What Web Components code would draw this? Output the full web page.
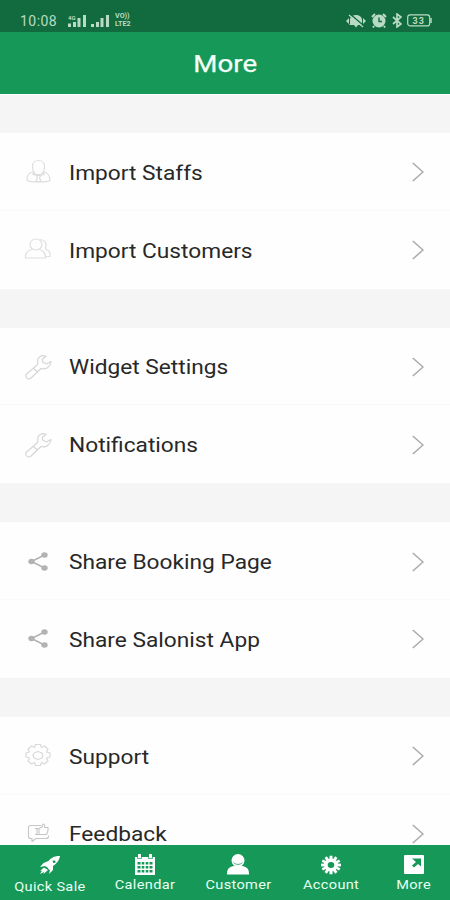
<!DOCTYPE html>
<html lang="en"><head><meta charset="utf-8"><title>More</title>
<style>
html,body{margin:0;padding:0;overflow:hidden}
body{width:450px;height:900px;font-family:Roboto,"Liberation Sans",sans-serif;background:#f5f5f5}
</style></head><body>
<more-screen></more-screen>
<script>
const define=(name,html)=>{
  const t=document.createElement('template');t.innerHTML=html;
  customElements.define(name,class extends HTMLElement{
    constructor(){super();this.attachShadow({mode:'open'}).append(t.content.cloneNode(true));}
    connectedCallback(){
      const icon=this.shadowRoot.querySelector('[data-icon]');
      if(icon)icon.innerHTML=ICONS[this.getAttribute('icon')]||'';
    }
  });
};
const ICONS={
staff:`<svg width="28" height="28" viewBox="0 0 28 28" fill="none" stroke="#dedede" stroke-width="1.2"><path d="M8.500 8.500c0-8 12-8 12 0c0 4-2 7-3.500 8h-5c-1.500-1-3.500-4-3.500-8z"/><path d="M10 13.500c-5 1-7.500 4-7 9c3 2 20 2 23 0c0-5-2.500-8-7-9M10 13.500l-1 3l5.500 1l5.500-1l-1-3M12 17.500h5l-1.500 2l1.500 4h-5l1.500-4z"/></svg>`,
customer:`<svg width="28" height="28" viewBox="0 0 28 28" fill="none" stroke="#dedede" stroke-width="1.2"><ellipse cx="12" cy="8.500" rx="6" ry="5.500"/><path d="M8 13.500c-4.500 1-7 4-6.500 8.500h20c0-5-2-7.500-6-8.500M15.500 3.500c5 0 8 4 6 7c0 1 0 2 .5 3c3 1 4.500 4 4 7h-4.500"/></svg>`,
wrench:`<svg width="28" height="28" viewBox="0 0 28 28" fill="none" stroke="#d6d6d6" stroke-width="1.200" stroke-linejoin="round"><path d="M22 3.500c-4-2.500-9.500 1-8 6c0 1-.5 2-1.500 3L2 21.500c-1.500 2 1.500 5.500 4.500 4L17 15.500c5 1.500 9.500-2 10-7l-4.500 2.500l-4-2l0-3z"/><path d="M9.500 15.500l4 3.500"/></svg>`,
share:`<svg width="28" height="28" viewBox="0 0 28 28" fill="#b2b2b2" stroke="#b2b2b2"><path d="M20.500 7L7.500 13.500l13 6.500" fill="none" stroke-width="1.500"/><g stroke="none"><ellipse cx="20.500" cy="7" rx="3.200" ry="2.700"/><ellipse cx="7.500" cy="13.500" rx="3.200" ry="2.700"/><ellipse cx="20.500" cy="20" rx="3.200" ry="2.700"/></g></svg>`,
gear:`<svg width="28" height="28" viewBox="0 0 28 28" fill="none" stroke="#d9d9d9" stroke-width="1.200" stroke-linejoin="round"><path d="M11.500 2.500h5l1 3l3-1.500l3.500 3l-1.500 3l3.500 1v4l-3.500 1l1.500 3l-3.500 3l-3-1.500l-1 3h-5l-1-3l-3 1.500L4 19l1.500-3L2 15v-4l3.500-1L4 7l3.500-3l3 1.500z"/><path d="M14 9.500l4 1.500l1 2.500l-1 2.500l-4 1.500l-4-1.500l-1-2.500l1-2.500z"/></svg>`,
feedback:`<svg width="28" height="28" viewBox="0 0 28 28" fill="none" stroke="#c6c6c6" stroke-width="1.100" stroke-linejoin="round"><path d="M17 5.500H7q-2.500 0-2.500 2v9q0 2 2.500 2h1v3l4-3h10q2.500 0 2.500-2v-1M11 8.500h4v6h-4M13 8.500v6M15 8.500l3-1.500l1-3c2 0 2 2 1.500 3.500H24v3l-1.500 4H15"/></svg>`,
rocket:`<svg width="22" height="20" viewBox="0 0 22 20" fill="#fff"><path fill-rule="evenodd" d="M21 1c-6-.2-9 2-11.500 5L4.500 8L1 12l5-1l2.500 1.500L11 15l-1 4l4-4v-4c4-3 6-5 7-10zM15 5.500a1.200 1.200 0 1 1 0 2.300a1.200 1.200 0 1 1 0-2.300z"/><path d="M8 10l6-4v6l-4 3z"/><path d="M5 12.500L1 16l2-.5L1 19l4-2l-.5 2L9 15z"/></svg>`,
calendar:`<svg width="22" height="21" viewBox="0 0 22 21"><path fill="#fff" d="M1 3h20v18H1zM4 0h3v4H4zM15 0h3v4h-3z"/><path d="M3.500 1v3.500h4V1M14.500 1v3.500h4V1" fill="none" stroke="#159858" stroke-width=".7"/><path fill="#159858" d="M3.500 8h3v2.500h-3zM7.700 8h2.600v2.500H7.700zM11.700 8h2.600v2.500h-2.600zM15.500 8h3v2.500h-3zM3.500 12h3v2.500h-3zM7.700 12h2.600v2.500H7.700zM11.700 12h2.600v2.500h-2.600zM15.500 12h3v2.500h-3zM3.500 16h3v2.500h-3zM7.700 16h2.600v2.500H7.700zM11.700 16h2.600v2.500h-2.600zM15.500 16h3v2.500h-3z"/></svg>`,
person:`<svg width="22" height="21" viewBox="0 0 22 21"><path fill="#fff" d="M0 20.500c0-6 2-7 6.500-8.500h9c4.500 1.500 6.500 2.500 6.500 8.500z"/><ellipse cx="11" cy="6.500" rx="6.500" ry="6.500" fill="#fff"/><path d="M6.500 8.500c2 2.500 7 2.500 9 0" fill="none" stroke="#159858" stroke-width=".8"/></svg>`,
cog:`<svg width="22" height="20" viewBox="-11 -10 22 20"><g fill="#fff"><ellipse rx="7" ry="6.500"/><g id="t"><path d="M-1.500-9.300h3v18.600h-3z"/><path d="M-10-1.400h20v2.800h-20z"/><path d="M-1.400-9.500h2.800v19h-2.800z" transform="rotate(34)"/><path d="M-1.400-9.500h2.800v19h-2.800z" transform="rotate(-34)"/><path d="M-1.300-9.800h2.600v19.600h-2.600z" transform="rotate(63)"/><path d="M-1.300-9.800h2.600v19.600h-2.600z" transform="rotate(-63)"/></g></g><ellipse rx="3.300" ry="3" fill="#159858"/></svg>`,
more:`<svg width="20" height="19" viewBox="0 0 20 19"><rect width="20" height="19" rx="1" fill="#fff"/><path fill="#159858" d="M8 3.500h9V11.500l-3-2.500l-4 3.500l-2-2L12 7z"/></svg>`
};
define('status-bar',`<style>
:host{display:flex;box-sizing:border-box;height:32px;background:#116b3e;color:#b9dbc5;padding:9px 18px 0 20px;align-items:center;justify-content:space-between}
.time{font-size:14px;letter-spacing:.45px;line-height:24px}.left,.right{display:flex;align-items:center;height:24px}
.sig{margin-left:11px}.right{gap:5px}svg{display:block}
.volte{display:grid;font-size:6.500px;font-weight:700;line-height:8px;margin:0 0 1px 5px;transform:scaleX(1.1);transform-origin:left}
.tiny{font-size:6px;font-weight:700}
</style><div class="left"><span class="time">10:08</span>
<svg class="sig" width="42" height="14" viewBox="0 0 42 14" fill="#b9dbc5"><text x="0" y="6" class="tiny">4G</text><path d="M0 9.500h3v3.500H0zM5 8h3v5H5zM9.500 4h3v9h-3zM15 1h3v12h-3zM23 10h3v3h-3zM28 8h3v5h-3zM32.500 4h3v9h-3zM38 1h3v12h-3z"/></svg>
<div class="volte"><span>VO))</span><span>LTE2</span></div></div>
<div class="right"><svg width="20" height="14" viewBox="0 0 20 14"><path fill="#b9dbc5" d="M4 10V6c0-4 4-5 6-5s6 1 6 5v4l1.500 1H3zM8 11h4l-2 2.500zM3 4v6L0 7zM17 4v6l3-3z"/><path d="M4 0l14 12" stroke="#116b3e" stroke-width="1.500"/><path d="M3 1l14 12" stroke="#b9dbc5" stroke-width="1.300"/></svg>
<svg width="16" height="15" viewBox="0 0 16 15"><ellipse cx="8" cy="8" rx="6.500" ry="6.500" fill="#b9dbc5"/><path d="M1 4l3-3M15 4l-3-3M3 13l-1 1.500M13 13l1 1.500" stroke="#b9dbc5" stroke-width="2"/><path d="M8 4.500V8.500h3" fill="none" stroke="#116b3e" stroke-width="1.400"/></svg>
<svg width="10" height="15" viewBox="0 0 10 15"><path d="M1 4l8 7l-4 3V1l4 3l-8 7" fill="none" stroke="#b9dbc5" stroke-width="1.700"/></svg>
<svg width="25" height="13" viewBox="0 0 25 13"><rect x=".7" y=".9" width="22" height="11" rx="2.500" fill="none" stroke="#b9dbc5" stroke-width="1.200"/><path d="M24 4v5" stroke="#b9dbc5" stroke-width="1.500"/><text x="5.500" y="9.700" font-size="9" font-weight="700" letter-spacing="1" fill="#b9dbc5">33</text></svg></div>`);
define('title-bar',`<style>:host{display:flex;box-sizing:border-box;height:62px;align-items:center;justify-content:center;background:#159858;color:#f4fff8;font-size:24.500px;font-weight:400;-webkit-text-stroke:.25px #f4fff8;padding-top:1px}
span{transform:scaleX(1.13)}</style><span><slot></slot></span>`);
define('menu-section',`<style>:host{display:block;background:#fefefe;margin-top:39px;height:155.600px;flex:none}</style><slot></slot>`);
define('menu-row',`<style>:host{display:flex;box-sizing:border-box;height:77.800px;align-items:center;padding:2px 26px 0 24px;border-bottom:1px solid #f9f9f9}
:host(:last-child){border-bottom-color:transparent}
.icon{width:28px;height:28px;flex:none}.icon svg{display:block}
.label{margin-left:17px;flex:1;font-size:20px;line-height:26px;color:#282828;white-space:nowrap;padding-top:1px}
.label span{display:inline-block;transform:scaleX(1.135);transform-origin:left}
.chev{display:block}</style><div class="icon" data-icon></div><div class="label"><span><slot></slot></span></div>
<svg class="chev" width="12" height="20" viewBox="0 0 12 20"><path d="M.8 1l10.200 9L.8 19" fill="none" stroke="#a9a9a9" stroke-width="1.500"/></svg>`);
define('tab-item',`<style>:host{display:flex;flex-direction:column;align-items:center;color:#e8fff2;font-size:13px;white-space:nowrap}
.icon{height:21px;display:flex;align-items:center}.icon svg{display:block}
.label{line-height:16px;margin-top:var(--gap,2px);transform:scaleX(1.12);letter-spacing:.3px}</style><div class="icon" data-icon></div><div class="label"><slot></slot></div>`);
define('tab-bar',`<style>:host{display:grid;grid-template-columns:99px 92px 94px 92px 74px;box-sizing:border-box;height:55px;flex:none;background:#159858;padding-top:9px}
::slotted(tab-item:first-child){--gap:4px}</style><slot></slot>`);
define('more-screen',`<style>:host{display:flex;flex-direction:column;width:450px;height:900px;overflow:hidden}
main{flex:1;min-height:0;overflow:hidden;background:#f5f5f5;border-top:1px solid #fff;box-sizing:border-box;display:flex;flex-direction:column}
menu-section:first-child{margin-top:38px}</style>
<status-bar></status-bar><title-bar>More</title-bar>
<main><menu-section><menu-row icon="staff">Import Staffs</menu-row><menu-row icon="customer">Import Customers</menu-row></menu-section>
<menu-section><menu-row icon="wrench">Widget Settings</menu-row><menu-row icon="wrench">Notifications</menu-row></menu-section>
<menu-section><menu-row icon="share">Share Booking Page</menu-row><menu-row icon="share">Share Salonist App</menu-row></menu-section>
<menu-section><menu-row icon="gear">Support</menu-row><menu-row icon="feedback">Feedback</menu-row></menu-section></main>
<tab-bar><tab-item icon="rocket">Quick Sale</tab-item><tab-item icon="calendar">Calendar</tab-item><tab-item icon="person">Customer</tab-item><tab-item icon="cog">Account</tab-item><tab-item icon="more">More</tab-item></tab-bar>`);
</script></body></html>
